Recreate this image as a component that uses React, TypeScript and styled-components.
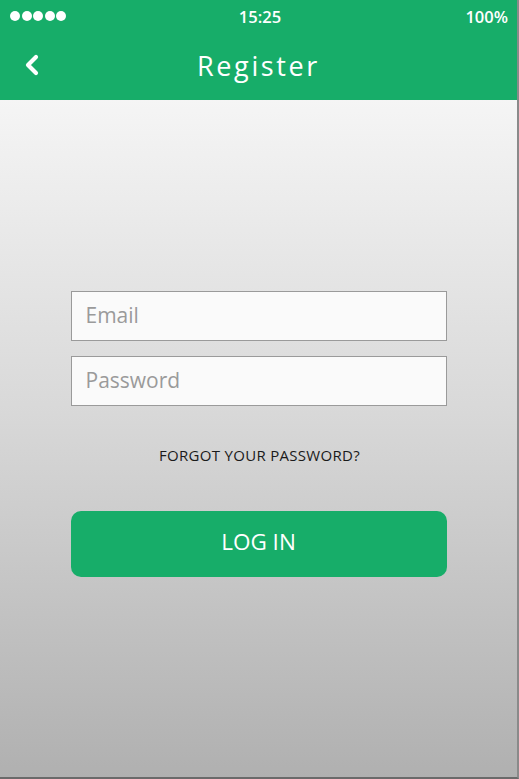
import React from 'react'
import styled, { createGlobalStyle } from 'styled-components'

const GlobalStyle = createGlobalStyle`
  html, body {
    margin: 0;
    padding: 0;
  }
  body {
    font-family: "Open Sans", "Noto Sans", "Liberation Sans", sans-serif;
  }
`

const Screen = styled.div`
  width: 519px;
  height: 779px;
  display: flex;
  flex-direction: column;
  box-sizing: border-box;
  border-right: 2px solid #8a8a8a;
  border-bottom: 2px solid #6a6a6a;
  overflow: hidden;
`

const Header = styled.div`
  background-color: #17ad69;
  color: #ffffff;
  height: 100px;
  flex-shrink: 0;
`

const StatusBar = styled.div`
  height: 32px;
  display: grid;
  grid-template-columns: 1fr auto 1fr;
  align-items: center;
  padding: 0 9px 0 10px;
  font-weight: 600;
  font-size: 16.5px;
`

const Dots = styled.div`
  display: flex;
  gap: 1.5px;
`

const Dot = styled.span`
  width: 10px;
  height: 10px;
  border-radius: 50%;
  background: #ffffff;
`

const Time = styled.div`
  text-align: center;
  padding-left: 2px;
`

const Battery = styled.div`
  text-align: right;
`

const NavBar = styled.div`
  height: 68px;
  display: flex;
  align-items: center;
  justify-content: center;
  position: relative;
`

const Back = styled.button`
  position: absolute;
  left: 22px;
  top: 22px;
  background: none;
  border: none;
  padding: 0;
  cursor: pointer;
`

const Title = styled.div`
  font-size: 27px;
  letter-spacing: 2.6px;
  margin-top: -2px;
`

const Body = styled.div`
  flex: 1;
  background: linear-gradient(to bottom, #f5f5f5 0%, #d9d9d9 45%, #b0b0b0 100%);
  display: flex;
  flex-direction: column;
  align-items: center;
  padding-top: 191px;
`

const Form = styled.div`
  width: 376px;
  display: flex;
  flex-direction: column;
`

const Field = styled.input`
  height: 50px;
  box-sizing: border-box;
  border: 1px solid #9a9a9a;
  background: #fafafa;
  padding: 0 14px 2px;
  font-family: inherit;
  font-size: 21px;
  color: #333;
  outline: none;
  & + & {
    margin-top: 15px;
  }
  &::placeholder {
    color: #9a9a9a;
  }
`

const Forgot = styled.div`
  text-align: center;
  font-size: 15px;
  letter-spacing: 0.3px;
  color: #1a1a1a;
  margin-top: 39px;
  margin-left: 2px;
`

const LoginButton = styled.button`
  margin-top: 46px;
  height: 66px;
  padding: 0 0 5px;
  border: none;
  border-radius: 10px;
  background: #17ad69;
  color: #ffffff;
  font-family: inherit;
  font-size: 22.5px;
  cursor: pointer;
`

const App: React.FC = () => {
  return (
    <>
      <GlobalStyle />
      <Screen>
        <Header>
          <StatusBar>
            <Dots>
              {[0, 1, 2, 3, 4].map(i => <Dot key={i} />)}
            </Dots>
            <Time>15:25</Time>
            <Battery>100%</Battery>
          </StatusBar>
          <NavBar>
            <Back aria-label="back">
              <svg width="20" height="22" viewBox="0 0 20 22">
                <path d="M14 3 L6 11 L14 19" fill="none" stroke="#fff" strokeWidth="4.2" strokeLinecap="round" strokeLinejoin="round" />
              </svg>
            </Back>
            <Title>Register</Title>
          </NavBar>
        </Header>
        <Body>
          <Form>
            <Field type="email" placeholder="Email" />
            <Field type="password" placeholder="Password" />
            <Forgot>FORGOT YOUR PASSWORD?</Forgot>
            <LoginButton>LOG IN</LoginButton>
          </Form>
        </Body>
      </Screen>
    </>
  )
}

export default App
